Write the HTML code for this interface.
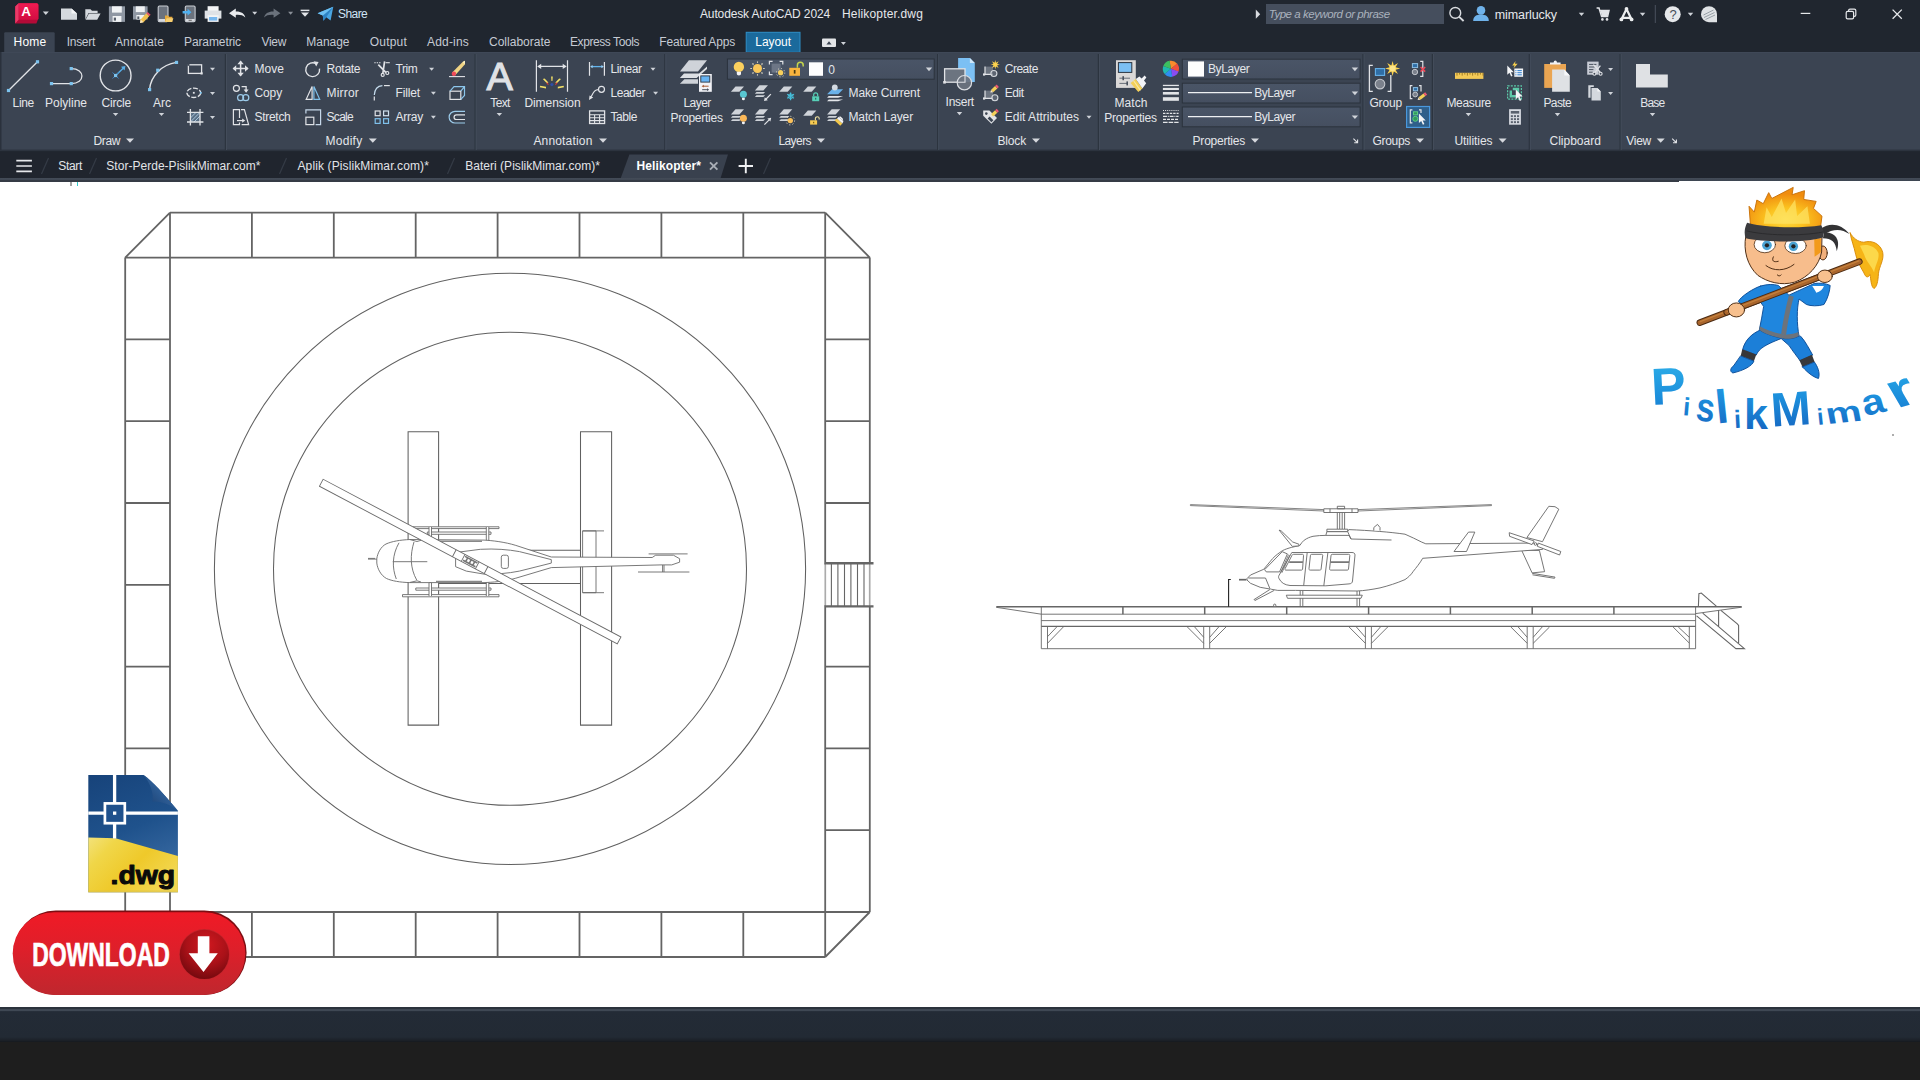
<!DOCTYPE html>
<html lang="en"><head><meta charset="utf-8"><title>Autodesk AutoCAD 2024 - Helikopter.dwg</title>
<style>
html,body{margin:0;padding:0;}
body{width:1920px;height:1080px;overflow:hidden;background:#fff;font-family:"Liberation Sans",sans-serif;position:relative;}
.t{position:absolute;white-space:pre;font-family:"Liberation Sans",sans-serif;}
.abs{position:absolute;}
#titlebar{left:0;top:0;width:1920px;height:52px;background:#20262f;}
#ribbon{left:0;top:52px;width:1920px;height:99px;background:#3b4452;}
#filetabs{left:0;top:151px;width:1920px;height:27px;background:#20252e;}
#tabline{left:0;top:177.7px;width:1920px;height:3px;background:linear-gradient(#444c58,#3c4450);}
#tabline2{left:0;top:180px;width:1678.8px;height:1.9px;background:#353b45;}
#bottom1{left:0;top:1007px;width:1920px;height:35px;background:linear-gradient(#2b333d 0,#2b333d 1.6px,#3f4854 2.2px,#3f4854 3.8px,#232b36 4.6px,#222a34 30px,#1b2027 33.5px,#15191e 35px);}
#bottom2{left:0;top:1042px;width:1920px;height:38px;background:#1e1e1e;}
svg{position:absolute;left:0;top:0;overflow:visible;}
</style></head><body>
<div class="abs" id="titlebar"></div>
<div class="abs" id="ribbon"></div>
<div class="abs" id="filetabs"></div>
<div class="abs" id="tabline"></div>
<div class="abs" id="tabline2"></div>
<div class="abs" id="bottom1"></div>
<div class="abs" id="bottom2"></div>
<svg width="1920" height="1080" viewBox="0 0 1920 1080" fill="none" stroke-linecap="butt" stroke-linejoin="miter">
<g stroke="#646464" stroke-width="1.8">
<path d="M170 212.6H825.2M125.2 257.6H869.8M125.2 912H869.8M170 957H825.2M125.2 257.6V912M170 212.6V957M825.2 212.6V957M869.8 257.6V912M125.2 257.6L170 212.6M825.2 212.6L869.8 257.6M869.8 912L825.2 957M125.2 912L170 957"/>
<path d="M251.9 212.6V257.6M251.9 912V957M125.2 339.4H170M825.2 339.4H869.8M333.8 212.6V257.6M333.8 912V957M125.2 421.2H170M825.2 421.2H869.8M415.7 212.6V257.6M415.7 912V957M125.2 503.0H170M825.2 503.0H869.8M497.6 212.6V257.6M497.6 912V957M125.2 584.8H170M579.5 212.6V257.6M579.5 912V957M125.2 666.6H170M825.2 666.6H869.8M661.4 212.6V257.6M661.4 912V957M125.2 748.4H170M825.2 748.4H869.8M743.3 212.6V257.6M743.3 912V957M125.2 830.2H170M825.2 830.2H869.8"/>
</g>
<g stroke="#666">
<path stroke-width="2.4" d="M825 563.2H873.5M825 606.4H873.5"/>
<path stroke-width="1.1" d="M831.4 563V606.5M837.9 563V606.5M844.5 563V606.5M850.9 563V606.5M857.5 563V606.5M864 563V606.5"/>
<path stroke="#fff" stroke-width="2.2" d="M825.2 564.6V605.2M869.8 564.6V605.2"/>
<path stroke-width="0.8" d="M825.2 563V606.5M869.8 563V606.5"/>
</g>
<g stroke="#606060" stroke-width="1.05">
<circle cx="510" cy="568.8" r="295.6"/><circle cx="510" cy="568.8" r="236.5"/>
<path d="M408.1 431.8H438.6V725.1H408.1ZM580.5 431.8H611.6V725.1H580.5ZM438.6 550.3H580.5M438.6 583.5H580.5"/>
</g>
<g stroke="#6a6a6a" stroke-width="0.9" fill="#fff">
<path d="M582.6 530.9H596V592.7H582.6Z"/><path d="M582.6 530.9H604M582.6 592.7H604"/>
<path d="M413 526.8H499V528.6H413ZM427.3 532H491V534.3H427.3ZM415.8 588H491V590.2H415.8ZM402.5 594.6H499V596.8H402.5Z"/>
<path d="M429 527V540.5H431.5V527M486.3 527V540.5H488.8V527M429 596V582.5H431.5V596M486.3 596V582.5H488.8V596"/>
<path d="M376.8 558.7C377.5 553 381 546.5 386 544C392 541.3 400 540 410 539.5L484 540.1C492 540.5 505 542 515.8 545.4L551.3 557L652.2 557.5L655.7 555.2H673.4L679.6 558.7V562.2L671.7 564.9H661L551.3 567.6L515.8 578.2C505 581.5 492 582.3 484 582.6H409.6C400 582.3 392 581 386.5 578.5C381 575.5 377.5 569 376.8 563.1Z"/>
<path d="M368 559.1H376.8M368 558.4H375"/>
<path d="M648.6 553.9H687.6M638 572H689.4M662.6 565V572M664 565V572"/>
<path d="M455.6 552.5L480.4 549.3C495 548.5 508 549.5 519.4 551.6L551.3 559.6V563.1L519.4 571.1C508 573.5 495 574.3 484 574.1L466.3 571.1L455.6 566.7Z"/>
<rect x="501.3" y="555.2" width="7.1" height="13.2" rx="2"/>
<path fill="none" d="M399 542.8C392 555 392 568 396.3 579M414 541.9C410 555 410 568 416.7 580M392.8 561.7H427.3"/>
<path fill="none" d="M410 539.6L417 541.5L421 540.3M409.6 582.5L417 580.8L421 582"/>
<path stroke-width="1.6" stroke="#888" fill="none" d="M436 541.3H482M436 581.6H482"/>
<g transform="translate(470.2 561.6) rotate(27.9)">
<rect x="-168.5" y="-3.95" width="337" height="7.9"/>
<path d="M-18 -3.95V3.95M18 -3.95V3.95M-8 -3.95V3.95M8 -3.95V3.95"/><path stroke-width="1.6" stroke="#777" d="M-7 -2.2H7M-7 2.2H7M-4 -3V3M0 -3V3M4 -3V3"/>
</g>
</g>
<g stroke="#666" stroke-width="0.9">
<path stroke-width="1.5" d="M996.3 606.8H1741.7"/>
<path d="M996.3 607.3L1041.3 614.2M1041.3 607V648.7M1041.3 614.2H1695.6M1041.3 620.6H1695.6M1695.6 607V648.7M1041.3 648.7H1695.6M1695.6 613.6L1741.7 607.2"/>
<path stroke-width="1.3" d="M1041.3 626.4H1695.6"/>
<path stroke-width="1.5" d="M1122.9 607V614.2M1204.7 607V614.2M1286.7 607V614.2M1368.6 607V614.2M1450.4 607V614.2M1532.2 607V614.2M1613.9 607V614.2"/>
<path d="M1047.5 626.4V648.7M1047.5 643.3L1063.3 627M1047.5 636.7L1056.7 627M1203.7 626.4V648.7M1209.7 626.4V648.7M1203.7 643.3L1187.4 627M1203.7 637.3L1194.7 627M1209.7 643.3L1226.0 627M1209.7 637.3L1218.7 627M1365.4 626.4V648.7M1371.4 626.4V648.7M1365.4 643.3L1349.1 627M1365.4 637.3L1356.4 627M1371.4 643.3L1387.7 627M1371.4 637.3L1380.4 627M1527.2 626.4V648.7M1533.2 626.4V648.7M1527.2 643.3L1510.9 627M1527.2 637.3L1518.2 627M1533.2 643.3L1549.5 627M1533.2 637.3L1542.2 627M1689.3 626.4V648.7M1689.3 643.1L1673.1 627M1689.3 637.3L1678.3 627"/>
<path stroke-width="1.1" d="M1698.4 606.1L1698.9 593.6L1701.3 593L1716.3 606.1M1702.7 613.2L1744.4 648.6H1735.9L1696.6 615.9M1718.6 610.3V626.7M1720.9 610.3L1737.3 623.9L1738.6 625.5V643.1"/>
<path stroke="#222" stroke-width="1.1" d="M1230.8 579.5H1228.6V606.7"/>
</g>
<g stroke="#666" stroke-width="0.9" fill="#fff">
<path d="M1190.4 504.6L1323.8 509.6V511L1190.4 505.6ZM1491.5 504.6L1358.1 509.6V511L1491.5 505.6Z" stroke-width="0.8"/>
<path d="M1323.8 508.8H1358V512.5H1323.8ZM1330 508.8V512.5M1352 508.8V512.5M1337.3 506.3H1344.6V508.8H1337.3ZM1337.3 512.5V529.2M1344.6 512.5V529.2M1339.7 512.5V529.2M1342.2 512.5V529.2"/>
<path d="M1326.9 529.2H1347.7V531.7H1326.9Z"/>
<path d="M1526.9 537.5L1548.8 506.3L1555 506.7L1558.8 509.2L1542.5 541.7Z"/>
<path d="M1521.7 550.4L1532.1 572.9L1544.6 571.7L1539.4 550.4Z"/>
<path d="M1532.1 573.3L1555 577.1L1554.5 578.3L1532.5 574.8"/>
<path d="M1247 578.6L1250.5 575L1263.7 569.3L1272.5 558.7C1276 555 1279 553 1282.2 550.8C1285 549.3 1288 548.3 1291.8 547.3L1299.8 545.5C1301 543.5 1302.5 541.6 1304.2 540.2C1307 538.2 1310 537 1313 536.3C1317 535.6 1322 535.4 1325.8 535.4L1326.9 531.7H1347.7L1348.8 529.6C1370 530.5 1390 532 1405 534.2C1411 536.5 1416 539.5 1421.7 542.1L1425.8 543.8L1534.2 543.1L1542.5 546.3V549.4L1422.7 558.3C1420 563 1416 568 1413.3 571.3C1411 575 1408 577.5 1405 579.6C1397 583 1388 586 1380 587.9C1372 589.5 1364 590.7 1357.1 591L1295.4 590.4H1277.8L1269.9 589L1260.2 587.3L1250.5 583.3L1247 580Z"/>
<path d="M1239 579.7H1246.5" stroke-width="1.7"/>
<path fill="none" d="M1248.3 578H1265.5L1269.9 588.6"/>
<path fill="none" d="M1264.6 569.7L1282.2 551.7L1287.4 553.9L1279.5 571.9H1266.3Z"/><path fill="none" d="M1288.6 554.6L1280.7 572.4M1289.8 555.2L1281.9 572.8" stroke-width="0.8"/>
<path fill="none" d="M1291.8 552.5H1352C1354 552.5 1355 553.5 1355 555L1352.5 581C1352.3 583 1351 583.8 1349 583.9L1325.8 585.8L1290 585.5C1284.5 585 1281 582.5 1279.2 578.8C1278.4 577.5 1278.4 576.8 1278.8 575.8Z"/>
<path fill="none" d="M1307.2 552.5L1303.7 585.5M1327.9 552.5L1323.8 585.8"/>
<path fill="none" d="M1293.6 554.3H1302.4C1303.3 554.3 1303.6 554.9 1303.5 555.7L1302.6 569C1302.5 569.9 1302 570.1 1301.2 570.1H1286C1285 570.1 1284.7 569.5 1285.1 568.6L1292 555.3C1292.4 554.6 1292.8 554.3 1293.6 554.3ZM1311.6 554.3H1321.5C1322.5 554.3 1322.8 554.9 1322.7 555.7L1321.1 569C1321 569.9 1320.6 570.1 1319.7 570.1H1310.2C1309.2 570.1 1308.9 569.5 1309 568.7L1310.4 555.7C1310.5 554.8 1310.8 554.3 1311.6 554.3ZM1332.2 554.3H1348.5C1349.6 554.3 1349.9 554.9 1349.8 555.7L1348.5 569C1348.4 569.9 1348 570.1 1347 570.1H1330.8C1329.8 570.1 1329.5 569.5 1329.6 568.7L1331 555.7C1331.1 554.8 1331.4 554.3 1332.2 554.3Z"/>
<path stroke-width="1.7" stroke="#777" d="M1289.2 562.2H1302.9M1330.4 562.2H1349"/>
<path fill="none" d="M1325.8 535.4H1349L1351 539L1391.5 540M1347.7 531.7L1351 539"/>
<path d="M1279.1 530.1L1281.3 531L1292.7 542L1298.9 544.2V545.9L1292.3 546.4Z"/>
<path d="M1373.8 530.6V527.5L1377.5 524.4L1380 527.5V530.6"/>
<path d="M1468.5 532.1H1474.8L1466.5 551.5H1454Z"/>
<path d="M1509.2 532.7L1534.2 541L1532 544.6L1509.6 536.3ZM1538.3 543.1L1560.8 551.5L1559.6 555L1537.3 546.3Z"/>
<circle cx="1535.5" cy="544" r="1.3"/>
<path d="M1300.2 590.6V606.7M1302.8 590.6V606.7M1357 591V606.7M1359.6 591V606.7"/>
<path d="M1286.3 595.2H1362.3L1361 598.3H1287.5Z"/>
<path d="M1269.9 589.5L1254 599.6L1254.9 600.5L1274.2 590.4"/>
<circle cx="1274.7" cy="605.3" r="1.2"/>
</g>
<path d="M71 182V186" stroke="#444" stroke-width="1"/><path d="M77.5 182V186" stroke="#3cc" stroke-width="1"/>
</svg>
<svg width="1920" height="182" viewBox="0 0 1920 182" fill="none">
<defs>
<linearGradient id="gA" x1="0" y1="0" x2="0" y2="1"><stop offset="0" stop-color="#f01b52"/><stop offset="1" stop-color="#d30d42"/></linearGradient>
<linearGradient id="gcombo" x1="0" y1="0" x2="0" y2="1"><stop offset="0" stop-color="#4a5567"/><stop offset="1" stop-color="#454f60"/></linearGradient>
</defs>
<path d="M4.2 52V33.5Q4.2 32.3 5.4 32.3H53.5Q54.7 32.3 54.7 33.5V52Z" fill="#3b4452"/>
<rect x="746.2" y="32.3" width="53.8" height="20" fill="#1b6a9c" stroke="#2f8fc8" stroke-width="1"/>
<rect x="0" y="52" width="1920" height="1" fill="#3f4857"/><rect x="0" y="149.6" width="1920" height="1.6" fill="#2c333e"/>
<rect x="0" y="52" width="1.5" height="98" fill="#2a313c"/>
<rect x="224.8" y="54" width="1.2" height="96" fill="#2c343f"/><rect x="226.0" y="54" width="1" height="96" fill="#434c5a"/>
<rect x="474.5" y="54" width="1.2" height="96" fill="#2c343f"/><rect x="475.7" y="54" width="1" height="96" fill="#434c5a"/>
<rect x="664.2" y="54" width="1.2" height="96" fill="#2c343f"/><rect x="665.4" y="54" width="1" height="96" fill="#434c5a"/>
<rect x="937.0" y="54" width="1.2" height="96" fill="#2c343f"/><rect x="938.2" y="54" width="1" height="96" fill="#434c5a"/>
<rect x="1097.8" y="54" width="1.2" height="96" fill="#2c343f"/><rect x="1099.0" y="54" width="1" height="96" fill="#434c5a"/>
<rect x="1362.4" y="54" width="1.2" height="96" fill="#2c343f"/><rect x="1363.6" y="54" width="1" height="96" fill="#434c5a"/>
<rect x="1431.8" y="54" width="1.2" height="96" fill="#2c343f"/><rect x="1433.0" y="54" width="1" height="96" fill="#434c5a"/>
<rect x="1528.7" y="54" width="1.2" height="96" fill="#2c343f"/><rect x="1529.9" y="54" width="1" height="96" fill="#434c5a"/>
<rect x="1619.5" y="54" width="1.2" height="96" fill="#2c343f"/><rect x="1620.7" y="54" width="1" height="96" fill="#434c5a"/>
<rect x="1266" y="4" width="178" height="20" fill="#454e5d"/>
<path d="M1255.8 9.6L1260.2 14.2L1255.8 18.8Z" fill="#d8dbe0"/>
<path d="M620.8 178L629.4 154.6H728L720.6 178Z" fill="#39414e"/>
<path d="M41.5 174L48.5 158" stroke="#343b46" stroke-width="1.2"/>
<path d="M89.5 174L96.5 158" stroke="#343b46" stroke-width="1.2"/>
<path d="M279.5 174L286.5 158" stroke="#343b46" stroke-width="1.2"/>
<path d="M447.5 174L454.5 158" stroke="#343b46" stroke-width="1.2"/>
<path d="M763.5 174L770.5 158" stroke="#343b46" stroke-width="1.2"/>
<path d="M16.3 160.6H31.9M16.3 166H31.9M16.3 171.4H31.9" stroke="#e6e8eb" stroke-width="1.6"/>
<path d="M710 162.3L717.4 169.7M717.4 162.3L710 169.7" stroke="#a9aeb6" stroke-width="1.9"/>
<path d="M738.6 166H753M745.8 158.8V173.2" stroke="#f0f1f3" stroke-width="1.9"/>
<path d="M15.2 6.5L18.6 3.2H36.6Q38.4 3.2 38.4 5V18.2L36.4 23.6H15.2Z" fill="#b30a37"/>
<path d="M18.6 3.2H36.6Q38.4 3.2 38.4 5V18.6Q38.4 19.8 37 19.8H18.6Z" fill="url(#gA)"/>
<path d="M15.2 6.5L18.6 3.2V19.8L15.2 23.6Z" fill="#ea3a68"/>
<path d="M42.8 11.5H48.8L45.8 14.9Z" fill="#cfd3d9"/>
<path d="M61 8.4H71.5L77 13.4V19.8H61Z" fill="#d5d9de"/><path d="M71.5 8.4V13.4H77Z" fill="#f4f5f7"/>
<path d="M85.3 19.6V9.2H90.5L92 10.8H97.6V13H88.6L85.3 19.6Z" fill="#d5d9de"/><path d="M88.9 13.6H100.6L97.2 19.8H85.6Z" fill="#d5d9de"/>
<path d="M108.9 6.3H125V21.9H108.9Z" fill="#8f97a3"/><rect x="112" y="6.3" width="9.8" height="6.3" fill="#f0f2f4"/><rect x="112.6" y="16" width="8.8" height="5.9" fill="#f0f2f4"/><rect x="113.8" y="17.6" width="2.2" height="3" fill="#555d69"/>
<path d="M133 6.3H147.6V19.5H133Z" fill="#8f97a3"/><rect x="135.8" y="6.3" width="9" height="5.8" fill="#f0f2f4"/><rect x="136.4" y="15" width="8" height="4.5" fill="#f0f2f4"/><rect x="137.3" y="16.4" width="2" height="2.6" fill="#555d69"/>
<path d="M140.6 19.4L146.4 13.2L149.4 16L143.5 22.2L140 22.9Z" fill="#f2c14e"/><path d="M146.4 13.2L147.6 12L150.6 14.8L149.4 16Z" fill="#e8506a"/><path d="M140.6 19.4L143.5 22.2L140 22.9Z" fill="#f7e6c4"/>
<rect x="158.2" y="6" width="9.8" height="15.8" rx="1.2" fill="#6b727d" stroke="#c9cdd3" stroke-width="1.1"/><rect x="158.8" y="19" width="8.8" height="2.6" fill="#d6d9de"/>
<path d="M165 22V15.6H168L169 16.8H172.4V22Z" fill="#e5a93c"/><path d="M166.6 18.3H173.4L172 22H165Z" fill="#f6cf72"/>
<rect x="185.3" y="6" width="9.8" height="15.8" rx="1.2" fill="#6b727d" stroke="#c9cdd3" stroke-width="1.1"/><rect x="185.9" y="19" width="8.8" height="2.6" fill="#d6d9de"/><rect x="188.6" y="19.8" width="3.2" height="0.9" fill="#555"/>
<path d="M182.6 11H187.6V8.8L191.4 12.2L187.6 15.6V13.4H182.6Z" fill="#4fb0f0"/>
<rect x="207.6" y="6.2" width="11" height="5" fill="#f3f4f6"/><path d="M204.7 10.6H221.4V18.6H204.7Z" fill="#dfe2e6"/><rect x="207.6" y="15.2" width="11" height="6.7" fill="#f3f4f6"/><rect x="209" y="17" width="8.2" height="3.6" fill="#79b8ee"/>
<path d="M229 13.2L235.8 8.6V11.4C241 11.2 244.6 13.4 245.3 17.6C243 15.2 240 14.6 235.8 14.9V17.8Z" fill="#e9ebee"/>
<path d="M252.2 11.7H257.2L254.7 14.7Z" fill="#cfd3d9"/>
<path d="M280.4 13.2L273.6 8.6V11.4C268.4 11.2 264.8 13.4 264.1 17.6C266.4 15.2 269.4 14.6 273.6 14.9V17.8Z" fill="#6b727c"/>
<path d="M288.1 11.7H293.1L290.6 14.7Z" fill="#8b9199"/>
<path d="M300.6 10.4H309.4" stroke="#e2e4e8" stroke-width="1.5"/>
<path d="M301.0 12.5H309.0L305.0 16.7Z" fill="#e2e4e8"/>
<path d="M317.6 13.2L333.3 6.8L330.6 20.6L326.2 17.2L323.4 20.8L322.8 15.6Z" fill="#4aa6e3"/><path d="M322.8 15.6L333.3 6.8L326.2 17.2L323.4 20.8Z" fill="#2d83c4"/><path d="M317.6 13.2L333.3 6.8L322.8 15.6Z" fill="#6cc0f2"/>
<circle cx="1455.3" cy="12.9" r="5.4" stroke="#d9dce0" stroke-width="1.4"/><path d="M1459.2 16.9L1463.6 21" stroke="#d9dce0" stroke-width="1.9"/>
<circle cx="1481" cy="10.4" r="4.3" fill="#6fb2ea"/><path d="M1473.2 21C1473.2 16.6 1476.4 14.6 1481 14.6C1485.6 14.6 1488.8 16.6 1488.8 21Z" fill="#6fb2ea"/>
<path d="M1578.8 12.8H1584.2L1581.5 16.0Z" fill="#cfd3d9"/>
<path d="M1596.6 8H1599L1601.6 16.6H1607.6L1609 10.6H1600" stroke="#e2e4e8" stroke-width="1.5" fill="none"/><path d="M1600.4 10.6H1609L1607.6 16H1601.8Z" fill="#e2e4e8"/><circle cx="1602.4" cy="19.4" r="1.3" fill="#e2e4e8"/><circle cx="1607" cy="19.4" r="1.3" fill="#e2e4e8"/>
<path d="M1626.5 9L1621.4 19.6M1626.5 9L1631.6 19.6M1623 17.8H1630" stroke="#eceef0" stroke-width="2.2"/><circle cx="1626.5" cy="9" r="1.9" fill="#eceef0"/><circle cx="1621.4" cy="19.4" r="1.9" fill="#eceef0"/><circle cx="1631.6" cy="19.4" r="1.9" fill="#eceef0"/>
<path d="M1639.8 12.8H1645.3L1642.6 16.0Z" fill="#cfd3d9"/>
<rect x="1654.8" y="5" width="1" height="18" fill="#4a525e"/>
<circle cx="1672.7" cy="14.2" r="8" fill="#e6e8eb"/>
<path d="M1687.8 12.8H1693.2L1690.5 16.0Z" fill="#cfd3d9"/>
<path d="M1709 6.2A8 8 0 1 0 1709 22.2H1717V14.2A8 8 0 0 0 1709 6.2Z" fill="#dfe2e5"/><path d="M1703.5 15L1713.5 10M1704 17.5L1714.5 12.5M1705.5 19.5L1715 15" stroke="#8f979f" stroke-width="0.9"/>
<path d="M1800.7 13.4H1810.3" stroke="#e6e8eb" stroke-width="1.2"/>
<rect x="1846.2" y="11.4" width="7.4" height="7.4" rx="1.4" stroke="#e6e8eb" stroke-width="1.2"/><path d="M1848.6 11.2V10.6Q1848.6 9.2 1850 9.2H1854.4Q1855.8 9.2 1855.8 10.6V15Q1855.8 16.4 1854.4 16.4H1853.8" stroke="#e6e8eb" stroke-width="1.2"/>
<path d="M1892.6 9.6L1901.8 18.8M1901.8 9.6L1892.6 18.8" stroke="#e6e8eb" stroke-width="1.3"/>
<rect x="822" y="38.6" width="14" height="8.4" rx="1" fill="#e3e5e8"/><path d="M826.4 44.4L829 41.2L831.6 44.4Z" fill="#3b4452"/>
<path d="M840.9 41.9H845.9L843.4 44.9Z" fill="#cfd3d9"/>
<path d="M8.5 90.5L37.5 61.8" stroke="#e1e3e7" stroke-width="1.3"/>
<rect x="6.90" y="88.90" width="3.2" height="3.2" fill="#7cc3ee"/>
<rect x="35.90" y="60.20" width="3.2" height="3.2" fill="#7cc3ee"/>
<path d="M51.5 83.6H71.25M71.25 83.6C85.5 83.6 85.5 68.6 71.25 68.6" stroke="#e1e3e7" stroke-width="1.3"/>
<rect x="49.90" y="82.00" width="3.2" height="3.2" fill="#7cc3ee"/>
<rect x="69.65" y="82.00" width="3.2" height="3.2" fill="#7cc3ee"/>
<rect x="69.65" y="67.00" width="3.2" height="3.2" fill="#7cc3ee"/>
<circle cx="115.6" cy="75.5" r="15.4" stroke="#e1e3e7" stroke-width="1.4"/>
<path d="M115.6 75.5L124 67.4" stroke="#58aee8" stroke-width="1.4"/><path d="M125.4 66L124.6 70.4L121 66.8Z" fill="#58aee8"/><path d="M112.6 72.5L118.6 78.5M118.6 72.5L112.6 78.5" stroke="#3b86c4" stroke-width="1"/>
<rect x="114.00" y="73.90" width="3.2" height="3.2" fill="#7cc3ee"/>
<path d="M149.6 89.6C150.5 76 162 64.5 176.5 62.4" stroke="#e1e3e7" stroke-width="1.4"/>
<rect x="148.00" y="88.00" width="3.2" height="3.2" fill="#7cc3ee"/>
<rect x="156.15" y="68.65" width="3.2" height="3.2" fill="#7cc3ee"/>
<rect x="174.90" y="60.80" width="3.2" height="3.2" fill="#7cc3ee"/>
<rect x="188.4" y="64.8" width="13.2" height="8.6" stroke="#e1e3e7" stroke-width="1.3"/>
<rect x="187.40" y="63.80" width="2" height="2" fill="#3b4452"/>
<rect x="200.50" y="72.30" width="2.2" height="2.2" fill="#e1e3e7"/>
<path d="M210.0 67.8H215.0L212.5 70.8Z" fill="#cfd3d9"/>
<ellipse cx="193.8" cy="92.8" rx="6.9" ry="4.7" stroke="#e1e3e7" stroke-width="1.3" stroke-dasharray="5 1.6"/>
<rect x="192.90" y="91.90" width="1.8" height="1.8" fill="#e1e3e7"/>
<rect x="199.90" y="91.90" width="1.8" height="1.8" fill="#7cc3ee"/>
<path d="M210.0 91.9H215.0L212.5 94.9Z" fill="#cfd3d9"/>
<rect x="190.4" y="112.4" width="9.6" height="9.6" fill="#5a7086"/><path d="M190.4 118L196 112.4M190.4 122L200 112.4M194 122L200 116" stroke="#a9c4dc" stroke-width="1"/>
<path d="M190.4 109V125.4M200 109V125.4M187 112.4H203.4M187 122H203.4" stroke="#e1e3e7" stroke-width="1.3"/>
<path d="M210.0 115.9H215.0L212.5 118.9Z" fill="#cfd3d9"/>
<path d="M112.8 112.9H118.3L115.6 116.1Z" fill="#cfd3d9"/>
<path d="M158.8 112.9H164.2L161.5 116.1Z" fill="#cfd3d9"/>
<path d="M126.0 138.4H134.0L130.0 142.8Z" fill="#d6d9de"/>
<path d="M233.4 68.5H247.8M240.6 61.4V75.6" stroke="#e1e3e7" stroke-width="1.5"/>
<path d="M232.6 68.5L236.2 65.3V71.7ZM248.6 68.5L245 65.3V71.7ZM240.6 60.6L237.4 64.2H243.8ZM240.6 76.4L237.4 72.8H243.8Z" fill="#e1e3e7"/>
<circle cx="236.4" cy="88.3" r="3" stroke="#e1e3e7" stroke-width="1.2"/><path d="M241.6 86.6H246.1V90.4" stroke="#e1e3e7" stroke-width="1.3"/><path d="M243.6 89.6H248.6L246.1 92.8Z" fill="#e1e3e7"/>
<circle cx="240.6" cy="97.7" r="3" stroke="#9ccbea" stroke-width="1.2"/><circle cx="245.8" cy="97.7" r="3" stroke="#9ccbea" stroke-width="1.2"/>
<path d="M239.5 118V109.6H233.4V124.6H239.5V122.6M241 109.6H244.4L248.6 124.6H241.6" stroke="#e1e3e7" stroke-width="1.2"/><path d="M237 120.6H243" stroke="#e1e3e7" stroke-width="1.2"/><path d="M245.2 120.6L242.2 118.4V122.8Z" fill="#e1e3e7"/>
<path d="M316.4 63.9A6.9 6.9 0 1 0 319.5 68.6" stroke="#e1e3e7" stroke-width="1.4"/><path d="M313.6 61.2L318.6 62L316.2 66.4Z" fill="#e1e3e7"/>
<path d="M312.1 86.4V99.3H306.2Z" stroke="#e1e3e7" stroke-width="1.2"/><path d="M313.9 86.4V99.3H319.7Z" stroke="#7fc0ea" stroke-width="1.2"/>
<rect x="305.9" y="117.2" width="7.9" height="7.4" stroke="#e1e3e7" stroke-width="1.2"/><path d="M305.9 113.4V109.8H320.6V124.6H315.6" stroke="#c6d8ea" stroke-width="1.2"/>
<path d="M374.3 62.7H381" stroke="#e1e3e7" stroke-width="1.1" stroke-dasharray="1.4 1"/><path d="M385.6 62.7H389.8" stroke="#e1e3e7" stroke-width="1.1"/>
<path d="M378.3 64.6L386 72.6M384.6 61.4L382.9 73" stroke="#e1e3e7" stroke-width="1.7"/><circle cx="382.7" cy="74.9" r="1.5" stroke="#e1e3e7" stroke-width="1.2"/><circle cx="387.3" cy="73" r="1.5" stroke="#e1e3e7" stroke-width="1.2"/>
<path d="M374.3 100.6V96.6" stroke="#e1e3e7" stroke-width="1.2"/><path d="M374.3 95C374.6 90 377.4 86 382.4 85.6" stroke="#c5dced" stroke-width="1.2"/><path d="M384 85.6H389.8" stroke="#e1e3e7" stroke-width="1.2"/>
<rect x="375.2" y="111" width="4.9" height="4.7" stroke="#e1e3e7" stroke-width="1.2"/>
<rect x="383.6" y="111" width="4.9" height="4.7" stroke="#cfe0ee" stroke-width="1.2"/>
<rect x="375.2" y="118.7" width="4.9" height="4.7" stroke="#7fc0ea" stroke-width="1.2"/>
<rect x="383.6" y="118.7" width="4.9" height="4.7" stroke="#7fc0ea" stroke-width="1.2"/>
<path d="M429.1 67.8H434.1L431.6 70.8Z" fill="#cfd3d9"/>
<path d="M430.9 91.8H435.9L433.4 94.8Z" fill="#cfd3d9"/>
<path d="M430.9 115.7H435.9L433.4 118.7Z" fill="#cfd3d9"/>
<path d="M452.2 72.4L462.6 62L465 60.8L464.8 64.4L455.2 75.2Z" fill="#f0d484"/><path d="M464.8 64.4L465 60.8L462.6 62Z" fill="#fff3c4"/><circle cx="453.9" cy="73.7" r="2.2" fill="#f04a5a"/>
<path d="M449 76.6H465" stroke="#e1e3e7" stroke-width="1.1"/>
<rect x="450" y="91.2" width="10.8" height="8.2" stroke="#e1e3e7" stroke-width="1.2"/><path d="M450 91.2L454 86.7H464.5V95.4L460.8 99.4M460.8 91.2L464.5 86.7" stroke="#8cc6ec" stroke-width="1.2"/>
<path d="M465 111.3H455A5.85 5.85 0 0 0 455 123H465" stroke="#9ccbea" stroke-width="1.2"/><path d="M465 114.8H456.4A2.35 2.35 0 0 0 456.4 119.5H465" stroke="#e1e3e7" stroke-width="1.2"/>
<path d="M368.8 138.4H376.8L372.8 142.8Z" fill="#d6d9de"/>
<path d="M496.6 112.9H502.1L499.4 116.1Z" fill="#cfd3d9"/>
<path d="M536.4 60.2V91.8M567.5 60.2V91.8M538.6 66.4H565.4" stroke="#e1e3e7" stroke-width="1.2"/><path d="M537.2 66.4L541.2 63.8V69ZM566.7 66.4L562.7 63.8V69Z" fill="#e1e3e7"/>
<path d="M551.1 76.6H552.8L552.4 81H551.5ZM542.8 79L544.6 78.4L548.4 82.4L547.2 83.6ZM561 79L559.2 78.4L555.4 82.4L556.6 83.6ZM539.8 87.2L540.2 85.8L546 86.8V88.4ZM564 87.2L563.6 85.8L557.8 86.8V88.4Z" fill="#f2e066"/>
<path d="M546.6 82.6L548.4 84.6M557.2 82.6L555.4 84.6" stroke="#d03a3a" stroke-width="1.2"/><circle cx="551.9" cy="84.6" r="1.6" fill="#2f4fa8"/>
<path d="M589.5 61.9V75.8M604.4 61.9V75.8" stroke="#e1e3e7" stroke-width="1.2"/><path d="M591 66.6H603" stroke="#62b4ee" stroke-width="1.3"/><path d="M590.2 66.6L592.6 65V68.2ZM603.8 66.6L601.4 65V68.2Z" fill="#9fd0f2"/>
<circle cx="601.5" cy="89.3" r="3" stroke="#e1e3e7" stroke-width="1.2"/><path d="M598.5 89.6C594.5 89.6 593.5 92.5 590.6 97.6" stroke="#e1e3e7" stroke-width="1.2"/><path d="M589 100L589.6 95.6L593.2 97.6Z" fill="#e1e3e7"/>
<rect x="589.6" y="110.9" width="15" height="12.6" stroke="#e1e3e7" stroke-width="1.3"/><path d="M589.6 114.7H604.6M589.6 117.7H604.6M589.6 120.6H604.6M594.6 114.7V123.5M599.6 114.7V123.5" stroke="#e1e3e7" stroke-width="1.1"/>
<path d="M650.5 67.8H655.5L653.0 70.8Z" fill="#cfd3d9"/>
<path d="M653.1 91.8H658.1L655.6 94.8Z" fill="#cfd3d9"/>
<path d="M599.0 138.4H607.0L603.0 142.8Z" fill="#d6d9de"/>
<path d="M679.9 83.8L684.4 79.3H698V83.8Z" fill="#cfd3d9"/><path d="M679.9 77.9L684 73.4H699L707 66.6V69L696.6 77.9Z" fill="#dde0e4"/><path d="M679.9 71.6L688.9 60.2H707L698 71.6Z" fill="#cfd3d9"/>
<rect x="699" y="74" width="12.8" height="17.8" fill="#f1f2f6"/><rect x="700.8" y="75.9" width="9" height="6.2" fill="#66b4f4" stroke="#2b3440" stroke-width="0.9"/>
<path d="M703 86.2H708.6" stroke="#a65a32" stroke-width="1"/><path d="M701.6 86.2L703.8 84.8V87.6Z" fill="#a65a32"/><path d="M702.2 89.7H707.6" stroke="#48505c" stroke-width="1"/><path d="M709.2 89.7L707 88.3V91.1Z" fill="#48505c"/>
<rect x="727.4" y="59" width="206.8" height="20.2" fill="url(#gcombo)" stroke="#2b323d" stroke-width="1"/>
<circle cx="738.9" cy="66.9" r="5.2" fill="#fbd05e"/><path d="M736.8 71.8H741V74Q741 75.4 738.9 75.4Q736.8 75.4 736.8 74Z" fill="#f1f2f5"/>
<circle cx="757.5" cy="68.5" r="4.5" fill="#fbc85a"/><path d="M757.5 61.4V62.8M757.5 74.2V75.6M750.4 68.5H751.8M763.2 68.5H764.6M752.5 63.5L753.5 64.5M761.5 72.5L762.5 73.5M752.5 73.5L753.5 72.5M761.5 64.5L762.5 63.5" stroke="#f3ead0" stroke-width="1.1"/>
<rect x="771.6" y="63.6" width="9" height="9" fill="#6d7686"/><path d="M769.4 64.6V61.4H772.6M779.6 61.4H782.8V64.6M769.4 71.4V74.6H772.6" stroke="#e1e3e7" stroke-width="1.2"/><circle cx="780.6" cy="72.7" r="2.6" fill="#f7cf5c"/><circle cx="780.6" cy="72.7" r="4.2" stroke="#e8e2c8" stroke-width="1" stroke-dasharray="1 2.3"/>
<rect x="789.3" y="67.8" width="10.7" height="8" fill="#f9b43e"/><path d="M797.4 67.8V65.2A2.9 2.9 0 0 1 803.2 65.2V66.4" stroke="#c4d44c" stroke-width="1.5"/><rect x="793.8" y="70" width="1.7" height="3.6" fill="#4a3a10"/>
<rect x="809" y="62.3" width="14" height="13.5" fill="#fdfdfd"/>
<path d="M925.8 67.6H932.2L929.0 71.2Z" fill="#cfd3d9"/>
<path d="M730.9 91.8L735.5 86.4H744.0L739.4 91.8Z" fill="#cfd3d9"/>
<circle cx="743.4" cy="94.3" r="3.5" fill="#58c6d2"/><path d="M742 97.8H744.8V99.2Q744.8 100.2 743.4 100.2Q742 100.2 742 99.2Z" fill="#f1f2f5"/>
<path d="M754.9 97.0L756.5 95.2H765.1L763.4 97.0Z" fill="#cfd3d9"/>
<path d="M754.9 93.7L756.5 91.9H765.1L763.4 93.7Z" fill="#cfd3d9"/>
<path d="M754.9 90.4L759.5 85.2H768.0L763.4 90.4Z" fill="#cfd3d9"/>
<path d="M770.9 94.2L765.6 99.5" stroke="#e1e3e7" stroke-width="1.2"/><path d="M764 101L764.8 97.2L767.8 100.2Z" fill="#e1e3e7"/>
<path d="M779.2 91.8L783.8 86.4H792.3L787.7 91.8Z" fill="#cfd3d9"/>
<path d="M790.6 92.4V100.2M787.2 94.3L794 98.3M794 94.3L787.2 98.3" stroke="#46bcd8" stroke-width="1.2"/><circle cx="790.6" cy="96.3" r="2.4" stroke="#46bcd8" stroke-width="0.9"/>
<path d="M803.2 91.8L807.8 86.4H816.3L811.7 91.8Z" fill="#cfd3d9"/>
<rect x="812.2" y="96.3" width="7" height="4.9" fill="#58d0b8"/><path d="M813.7 96.3V94.8A2 2 0 0 1 817.7 94.8V96.3" stroke="#58d0b8" stroke-width="1.2"/><rect x="815.2" y="97.8" width="1" height="1.8" fill="#1d5a4c"/>
<path d="M827.1 101.2L828.7 99.4H843.1L838.2 101.2Z" fill="#e4e6ea"/><path d="M827.1 97.7L828.7 95.9H843.1L838.2 97.7Z" fill="#e4e6ea"/>
<path d="M827.1 94.2L832 89.3H843.1L838.2 94.2Z" fill="#6ab2ea"/><circle cx="834.8" cy="87.5" r="2.9" fill="#d3dae2"/>
<path d="M730.9 121.0L732.5 119.2H741.1L739.4 121.0Z" fill="#cfd3d9"/>
<path d="M730.9 117.7L732.5 115.9H741.1L739.4 117.7Z" fill="#cfd3d9"/>
<path d="M730.9 114.4L735.5 109.2H744.0L739.4 114.4Z" fill="#cfd3d9"/>
<circle cx="743.4" cy="118.3" r="3.5" fill="#fbb858"/><path d="M742 121.8H744.8V123.2Q744.8 124.2 743.4 124.2Q742 124.2 742 123.2Z" fill="#f1f2f5"/>
<path d="M754.9 121.0L756.5 119.2H765.1L763.4 121.0Z" fill="#cfd3d9"/>
<path d="M754.9 117.7L756.5 115.9H765.1L763.4 117.7Z" fill="#cfd3d9"/>
<path d="M754.9 114.4L759.5 109.2H768.0L763.4 114.4Z" fill="#cfd3d9"/>
<path d="M764.4 124.6L769.6 119.4" stroke="#e1e3e7" stroke-width="1.2"/><path d="M771.2 117.8L770.4 121.6L767.4 118.6Z" fill="#e1e3e7"/>
<path d="M779.2 121.0L780.8 119.2H789.4L787.7 121.0Z" fill="#cfd3d9"/>
<path d="M779.2 117.7L780.8 115.9H789.4L787.7 117.7Z" fill="#cfd3d9"/>
<path d="M779.2 114.4L783.8 109.2H792.3L787.7 114.4Z" fill="#cfd3d9"/>
<circle cx="790.3" cy="120.6" r="2.7" fill="#f9c05a"/><circle cx="790.3" cy="120.6" r="4.3" stroke="#efe6c8" stroke-width="1" stroke-dasharray="1 2.3"/>
<path d="M803.2 115.8L807.8 110.4H816.3L811.7 115.8Z" fill="#cfd3d9"/>
<rect x="810.1" y="120.3" width="7" height="4.3" fill="#f6ca52"/><path d="M815.4 120.3V118.6A1.9 1.9 0 0 1 819.2 118.6V119.4" stroke="#f1e3a0" stroke-width="1.1"/><rect x="813.2" y="121.8" width="1" height="1.5" fill="#5a4a10"/>
<path d="M827.1 121.0L828.7 119.2H837.3L835.6 121.0Z" fill="#cfd3d9"/>
<path d="M827.1 117.7L828.7 115.9H837.3L835.6 117.7Z" fill="#cfd3d9"/>
<path d="M827.1 114.4L831.7 109.2H840.2L835.6 114.4Z" fill="#cfd3d9"/>
<path d="M834.6 120.6L837 118.4L842.4 123.6L840.2 125.8Z" fill="#f2c84c"/><path d="M837 118.4L838.8 116.8L843.4 121.4L842.4 123.6Z" fill="#f4f4f6"/><path d="M838.8 116.8L840.6 116.4L842.6 118.4L843.4 121.4Z" fill="#f4f4f6"/>
<path d="M817.0 138.4H825.0L821.0 142.8Z" fill="#d6d9de"/>
<path d="M958.1 58.1H969.9L974.8 62.9V82H958.1Z" fill="#7cc0f4"/><path d="M969.9 58.1V62.9H974.8Z" fill="#cfe7f9"/>
<rect x="944.6" y="68.8" width="20.4" height="13.4" fill="#6c7480" stroke="#e1e3e7" stroke-width="1.3"/><rect x="943.2" y="81" width="2.6" height="2.6" fill="#e1e3e7"/>
<circle cx="964.4" cy="82.7" r="7.2" fill="#6c7480" fill-opacity="0.92" stroke="#dadde2" stroke-width="1.2"/><path d="M957.2 82.2H965V75.6" stroke="#dadde2" stroke-width="1.1"/>
<path d="M956.8 112.1H962.2L959.5 115.3Z" fill="#cfd3d9"/>
<rect x="985" y="66.6" width="8" height="7.6" fill="#6c7480"/><path d="M985 66.6V74.39999999999999H993" stroke="#e1e3e7" stroke-width="1.2"/><rect x="983" y="73.39999999999999" width="2.2" height="2.2" fill="#e1e3e7"/>
<circle cx="993.9" cy="73.5" r="3" fill="#6c7480" fill-opacity="0.7" stroke="#d4d8dd" stroke-width="1.1"/>
<path d="M995.3 60.0L996.0 62.8L998.6 61.3L997.1 63.9L999.9 64.6L997.1 65.3L998.6 67.9L996.0 66.4L995.3 69.2L994.6 66.4L992.0 67.9L993.5 65.3L990.7 64.6L993.5 63.9L992.0 61.3L994.6 62.8Z" fill="#fbd24e"/>
<rect x="985" y="90.6" width="8" height="7.6" fill="#6c7480"/><path d="M985 90.6V98.39999999999999H993" stroke="#e1e3e7" stroke-width="1.2"/><rect x="983" y="97.39999999999999" width="2.2" height="2.2" fill="#e1e3e7"/>
<circle cx="994.9" cy="97.7" r="3" fill="#6c7480" fill-opacity="0.7" stroke="#d4d8dd" stroke-width="1.1"/>
<path d="M990.4 92.6L993.2 92.2L991.1 89.8Z" fill="#f4e6cc"/><path d="M993.2 92.2L997.3 88.5L995.1 86.1L991.1 89.8Z" fill="#f3cf58"/><path d="M997.3 88.5L998.9 87.0L996.7 84.6L995.1 86.1Z" fill="#ee5a72"/>
<path d="M983.2 110.6H989.4L997 117.9L991.4 123.8L983.2 115.8Z" fill="#e1e3e7"/><circle cx="986.3" cy="113.6" r="1.3" fill="#3b4452"/><path d="M989.6 116.4L993.4 120.2L991.4 122.2L987.6 118.4Z" fill="#3b4452"/>
<path d="M990.4 116.8L993.2 116.4L991.1 114.0Z" fill="#f4e6cc"/><path d="M993.2 116.4L997.3 112.7L995.1 110.3L991.1 114.0Z" fill="#f3cf58"/><path d="M997.3 112.7L998.9 111.2L996.7 108.8L995.1 110.3Z" fill="#ee5a72"/>
<path d="M1086.5 115.8H1091.5L1089.0 118.8Z" fill="#cfd3d9"/>
<path d="M1032.0 138.4H1040.0L1036.0 142.8Z" fill="#d6d9de"/>
<rect x="1116" y="60.2" width="19.8" height="27.7" fill="#dbd9d8"/><rect x="1118.4" y="62.6" width="13.4" height="9.8" fill="#7cc0f4" stroke="#2b3440" stroke-width="1"/>
<path d="M1119.4 78.2H1130M1119.4 83.4H1128" stroke="#5a626e" stroke-width="0.9"/><rect x="1122.4" y="76.2" width="1.6" height="4" fill="#4a525e"/><rect x="1126.4" y="81.4" width="1.6" height="4" fill="#4a525e"/>
<path d="M1130.6 83.1L1135.8 78.9L1142.4 88.6L1138.3 92.1Z" fill="#f3cf58"/><path d="M1133.6 80.8L1140.4 90.4" stroke="#f9eaa8" stroke-width="1.1"/><path d="M1135.8 78.9L1139.4 76.4L1141.6 78.6L1144.6 75.6L1146.4 77.4L1144 80.4L1146.2 83.2L1142.4 88.6Z" fill="#f2f3f6"/>
<path d="M1170.9 68.8L1169.49 60.82A8.1 8.1 0 0 1 1177.19 63.70Z" fill="#f98c2c"/>
<path d="M1170.9 68.8L1177.10 63.59A8.1 8.1 0 0 1 1178.46 71.70Z" fill="#f0503c"/>
<path d="M1170.9 68.8L1178.51 71.57A8.1 8.1 0 0 1 1172.17 76.80Z" fill="#8a4cf0"/>
<path d="M1170.9 68.8L1172.31 76.78A8.1 8.1 0 0 1 1164.61 73.90Z" fill="#2f8cf0"/>
<path d="M1170.9 68.8L1164.70 74.01A8.1 8.1 0 0 1 1163.34 65.90Z" fill="#20b8b0"/>
<path d="M1170.9 68.8L1163.29 66.03A8.1 8.1 0 0 1 1169.63 60.80Z" fill="#3cc060"/>
<rect x="1162.9" y="84.8" width="16" height="1.3" fill="#e3e5e8"/>
<rect x="1162.9" y="87.9" width="16" height="2.1" fill="#e3e5e8"/>
<rect x="1162.9" y="92" width="16" height="2.6" fill="#e3e5e8"/>
<rect x="1162.9" y="97.2" width="16" height="3.6" fill="#e3e5e8"/>
<path d="M1163 110.5H1178.6" stroke="#e3e5e8" stroke-width="1.1" stroke-dasharray="1 1.1"/><path d="M1163 113.4H1178.6" stroke="#e3e5e8" stroke-width="1.2" stroke-dasharray="2.4 1"/><path d="M1163 116.4H1178.6" stroke="#e3e5e8" stroke-width="1.1" stroke-dasharray="4 0.8 1 0.8"/><path d="M1163 119.4H1178.6" stroke="#e3e5e8" stroke-width="1.2" stroke-dasharray="3 1"/><path d="M1163 122.4H1178.6" stroke="#e3e5e8" stroke-width="1.3" stroke-dasharray="4.6 1"/>
<rect x="1182.3" y="59.2" width="177.8" height="19.8" fill="url(#gcombo)" stroke="#2b323d" stroke-width="1"/>
<path d="M1351.7 67.6H1358.1L1354.9 71.2Z" fill="#cfd3d9"/>
<rect x="1182.3" y="83.2" width="177.8" height="19.8" fill="url(#gcombo)" stroke="#2b323d" stroke-width="1"/>
<path d="M1351.7 91.6H1358.1L1354.9 95.2Z" fill="#cfd3d9"/>
<rect x="1182.3" y="107" width="177.8" height="19.8" fill="url(#gcombo)" stroke="#2b323d" stroke-width="1"/>
<path d="M1351.7 115.4H1358.1L1354.9 119.0Z" fill="#cfd3d9"/>
<rect x="1188" y="61.4" width="16" height="15.2" fill="#fdfdfd"/>
<path d="M1188 92.6H1252M1188 116.6H1252" stroke="#eef0f2" stroke-width="1.1"/>
<path d="M1251.0 138.4H1259.0L1255.0 142.8Z" fill="#d6d9de"/>
<path d="M1353.4 138.6L1357.4 142.6M1357.6 139.4V142.8H1354.2" stroke="#e1e3e7" stroke-width="1.1"/>
<path d="M1372.8 65.4H1369.4V91.4H1372.8M1387.6 91.4H1390.8V75" stroke="#e1e3e7" stroke-width="1.3"/>
<rect x="1375.4" y="68.6" width="9.2" height="6.8" fill="#2f6ea6" stroke="#66b2ea" stroke-width="1.1"/><circle cx="1380" cy="84.1" r="4.8" fill="#7b818c" stroke="#c2c6cc" stroke-width="1.1"/>
<path d="M1392.6 60.9L1393.8 65.5L1398.0 63.1L1395.6 67.3L1400.2 68.5L1395.6 69.7L1398.0 73.9L1393.8 71.5L1392.6 76.1L1391.4 71.5L1387.2 73.9L1389.6 69.7L1385.0 68.5L1389.6 67.3L1387.2 63.1L1391.4 65.5Z" fill="#fbd24e"/>
<circle cx="1392.6" cy="68.5" r="3" fill="#fde58a"/>
<rect x="1412.4" y="63.6" width="5.2" height="4" fill="#2f6ea6" stroke="#8cbfe4" stroke-width="1"/><circle cx="1414.9" cy="72" r="2.7" fill="#7b818c" stroke="#c2c6cc" stroke-width="1"/>
<path d="M1420.2 61.3H1422.8V76.4H1420.2" stroke="#e1e3e7" stroke-width="1.2"/><path d="M1420.6 67L1425.2 71.6M1425.2 67L1420.6 71.6" stroke="#f04a5a" stroke-width="1.5"/>
<path d="M1412.4 85.6H1410.3V98.6H1412.4M1419 85.6H1421V91.6" stroke="#e1e3e7" stroke-width="1.2"/><rect x="1413.4" y="87.6" width="4.2" height="3.2" fill="#2f6ea6" stroke="#8cbfe4" stroke-width="1"/><circle cx="1415.2" cy="94.5" r="2.4" fill="#7b818c" stroke="#c2c6cc" stroke-width="1"/>
<path d="M1417.6 99.9L1420.5 99.8L1418.6 97.2Z" fill="#f4e6cc"/><path d="M1420.5 99.8L1425.4 96.1L1423.5 93.5L1418.6 97.2Z" fill="#f3cf58"/><path d="M1425.4 96.1L1427.2 94.8L1425.2 92.2L1423.5 93.5Z" fill="#ee5a72"/>
<rect x="1406.6" y="106.5" width="23" height="20.9" fill="#2f5f8a" stroke="#4a98dc" stroke-width="1.2"/>
<path d="M1412.4 109.9H1410.3V122.9H1412.4M1419 109.9H1421V113" stroke="#e1e3e7" stroke-width="1.2"/><rect x="1413.5" y="111.8" width="4" height="3" fill="#2f9a5c" stroke="#5cc884" stroke-width="1"/><circle cx="1415.3" cy="118.8" r="2.5" fill="#2f9a5c" stroke="#5cc884" stroke-width="1"/>
<path d="M1418.9 113.4L1418.9 123.1L1421.2 121.0L1422.9 124.8L1424.4 124.1L1422.7 120.4L1425.7 120.4Z" fill="#f4f5f7"/>
<path d="M1416.0 138.4H1424.0L1420.0 142.8Z" fill="#d6d9de"/>
<rect x="1455" y="72.8" width="28.4" height="6.1" fill="#f3c956"/>
<path d="M1457.0 72.8V75.6M1459.6 72.8V74.6M1462.2 72.8V75.6M1464.8 72.8V74.6M1467.4 72.8V75.6M1470.0 72.8V74.6M1472.6 72.8V75.6M1475.2 72.8V74.6M1477.8 72.8V75.6M1480.4 72.8V74.6M1483.0 72.8V75.6" stroke="#8a6a1c" stroke-width="0.8"/>
<path d="M1465.7 113.0H1471.2L1468.4 116.2Z" fill="#cfd3d9"/>
<path d="M1507.3 65.6L1507.3 74.8L1509.5 72.8L1511.1 76.4L1512.5 75.8L1510.9 72.3L1513.8 72.3Z" fill="#f4f5f7"/>
<path d="M1515.6 61L1512.2 65.4H1514.6L1513.4 68.6L1517.6 63.8H1515Z" fill="#f6cf4e"/>
<rect x="1514.3" y="68.5" width="8.8" height="8.3" fill="#f1f3f6"/><path d="M1517.4 70.6H1521.8M1517.4 72.7H1521.8M1517.4 74.8H1521.8" stroke="#2f7fd0" stroke-width="1"/><path d="M1515.4 70.6H1516.4M1515.4 72.7H1516.4M1515.4 74.8H1516.4" stroke="#2f7fd0" stroke-width="1"/>
<rect x="1507.6" y="85.8" width="13.8" height="13.4" stroke="#5cc8a8" stroke-width="1.2" stroke-dasharray="2 1.2"/><path d="M1509.6 90.4H1512V95H1516.6V97.4H1509.6ZM1512.8 87.8H1519.2V95H1516.8V90.2H1512.8Z" fill="#5cc8a8"/>
<path d="M1515.8 89.6L1515.8 99.3L1518.1 97.2L1519.8 101.0L1521.3 100.3L1519.6 96.6L1522.6 96.6Z" fill="#f4f5f7"/>
<rect x="1509.1" y="109.2" width="11.8" height="15.5" fill="#d7dbe1"/><rect x="1510.8" y="111" width="8.4" height="2.6" fill="#5a626e"/>
<rect x="1510.8" y="115.2" width="2.1" height="1.9" fill="#5a626e"/>
<rect x="1513.9" y="115.2" width="2.1" height="1.9" fill="#5a626e"/>
<rect x="1517.0" y="115.2" width="2.1" height="1.9" fill="#5a626e"/>
<rect x="1510.8" y="118.2" width="2.1" height="1.9" fill="#5a626e"/>
<rect x="1513.9" y="118.2" width="2.1" height="1.9" fill="#5a626e"/>
<rect x="1517.0" y="118.2" width="2.1" height="1.9" fill="#5a626e"/>
<rect x="1510.8" y="121.2" width="2.1" height="1.9" fill="#5a626e"/>
<rect x="1513.9" y="121.2" width="2.1" height="1.9" fill="#5a626e"/>
<rect x="1517.0" y="121.2" width="2.1" height="1.9" fill="#5a626e"/>
<path d="M1498.6 138.4H1506.6L1502.6 142.8Z" fill="#d6d9de"/>
<rect x="1544.2" y="64" width="21.8" height="23.9" fill="#eaa552"/><path d="M1550 64.4V62.4H1553.6Q1553.8 60.4 1555.3 60.4Q1556.8 60.4 1557 62.4H1560.6V64.4Z" fill="#f1f2f5"/>
<path d="M1552.1 69.5H1564.3L1569.8 75.4V91.8H1552.1Z" fill="#dfe1e4"/><path d="M1564.3 69.5V75.4H1569.8Z" fill="#f7f8fa"/>
<path d="M1554.8 113.0H1560.2L1557.5 116.2Z" fill="#cfd3d9"/>
<rect x="1587.2" y="61.6" width="11.4" height="13.1" fill="#c9cdd6"/><path d="M1589 64.4H1596.4M1589 67H1594.6M1589 69.6H1593.4M1589 72.2H1592.8" stroke="#4a525e" stroke-width="1"/>
<path d="M1593.4 64.6L1600.2 72.2M1600.4 65.6L1595 72.4" stroke="#e1e3e7" stroke-width="1.3"/><circle cx="1594.4" cy="73.8" r="1.5" stroke="#e1e3e7" stroke-width="1.1" fill="#3b4452"/><circle cx="1600.6" cy="73.8" r="1.5" stroke="#e1e3e7" stroke-width="1.1" fill="#3b4452"/>
<path d="M1588.3 85.2H1593.8V87H1590.6V97.7H1588.3Z" fill="#d4d8de"/><path d="M1591.5 87.9H1597.4L1600.8 91.4V100.4H1591.5Z" fill="#d4d8de"/><path d="M1597.4 87.9V91.4H1600.8Z" fill="#f2f3f6"/>
<path d="M1608.1 68.1H1613.1L1610.6 71.1Z" fill="#cfd3d9"/>
<path d="M1608.1 91.9H1613.1L1610.6 94.9Z" fill="#cfd3d9"/>
<path d="M1636 64H1650V74.4H1667.8V87.6H1636Z" fill="#dfe1e4"/>
<path d="M1649.8 113.0H1655.2L1652.5 116.2Z" fill="#cfd3d9"/>
<path d="M1656.7 138.4H1664.7L1660.7 142.8Z" fill="#d6d9de"/>
<path d="M1672.2 138.6L1676.2 142.6M1676.4 139.4V142.8H1673" stroke="#e1e3e7" stroke-width="1.1"/>
</svg>
<span class="t" style="left:338.0px;top:5.86px;font-size:12px;line-height:16px;color:#cfe3f5;letter-spacing:-0.565px;">Share</span>
<span class="t" style="left:700.0px;top:5.86px;font-size:12px;line-height:16px;color:#e6e8ec;letter-spacing:-0.131px;">Autodesk AutoCAD 2024</span>
<span class="t" style="left:842.0px;top:5.86px;font-size:12px;line-height:16px;color:#e6e8ec;letter-spacing:0.163px;">Helikopter.dwg</span>
<span class="t" style="left:1268.7px;top:6.54px;font-size:11.5px;line-height:15px;color:#aab2be;letter-spacing:-0.467px;font-style:italic;">Type a keyword or phrase</span>
<span class="t" style="left:1494.7px;top:6.69px;font-size:12.5px;line-height:16px;color:#e6e8ec;letter-spacing:-0.090px;">mimarlucky</span>
<span class="t" style="left:21.3px;top:3.34px;font-size:13.5px;line-height:18px;color:#ffffff;letter-spacing:0.450px;font-weight:bold;">A</span>
<span class="t" style="left:13.5px;top:33.86px;font-size:12px;line-height:16px;color:#ffffff;letter-spacing:0.222px;">Home</span>
<span class="t" style="left:66.7px;top:33.86px;font-size:12px;line-height:16px;color:#c5cad3;letter-spacing:-0.285px;">Insert</span>
<span class="t" style="left:115.0px;top:33.86px;font-size:12px;line-height:16px;color:#c5cad3;letter-spacing:0.120px;">Annotate</span>
<span class="t" style="left:184.0px;top:33.86px;font-size:12px;line-height:16px;color:#c5cad3;letter-spacing:-0.102px;">Parametric</span>
<span class="t" style="left:261.5px;top:33.86px;font-size:12px;line-height:16px;color:#c5cad3;letter-spacing:-0.324px;">View</span>
<span class="t" style="left:306.3px;top:33.86px;font-size:12px;line-height:16px;color:#c5cad3;letter-spacing:-0.028px;">Manage</span>
<span class="t" style="left:369.8px;top:33.86px;font-size:12px;line-height:16px;color:#c5cad3;letter-spacing:0.196px;">Output</span>
<span class="t" style="left:427.0px;top:33.86px;font-size:12px;line-height:16px;color:#c5cad3;letter-spacing:0.187px;">Add-ins</span>
<span class="t" style="left:489.0px;top:33.86px;font-size:12px;line-height:16px;color:#c5cad3;letter-spacing:0.012px;">Collaborate</span>
<span class="t" style="left:570.0px;top:33.86px;font-size:12px;line-height:16px;color:#c5cad3;letter-spacing:-0.422px;">Express Tools</span>
<span class="t" style="left:659.3px;top:33.86px;font-size:12px;line-height:16px;color:#c5cad3;letter-spacing:-0.181px;">Featured Apps</span>
<span class="t" style="left:755.3px;top:33.86px;font-size:12px;line-height:16px;color:#ffffff;letter-spacing:-0.055px;">Layout</span>
<span class="t" style="left:12.5px;top:94.86px;font-size:12px;line-height:16px;color:#e4e6ea;letter-spacing:-0.297px;">Line</span>
<span class="t" style="left:45.0px;top:94.86px;font-size:12px;line-height:16px;color:#e4e6ea;letter-spacing:-0.003px;">Polyline</span>
<span class="t" style="left:101.5px;top:94.86px;font-size:12px;line-height:16px;color:#e4e6ea;letter-spacing:-0.195px;">Circle</span>
<span class="t" style="left:153.0px;top:94.86px;font-size:12px;line-height:16px;color:#e4e6ea;letter-spacing:-0.000px;">Arc</span>
<span class="t" style="left:93.5px;top:132.86px;font-size:12px;line-height:16px;color:#e4e6ea;letter-spacing:-0.376px;">Draw</span>
<span class="t" style="left:254.5px;top:60.86px;font-size:12px;line-height:16px;color:#e4e6ea;letter-spacing:0.039px;">Move</span>
<span class="t" style="left:254.5px;top:84.86px;font-size:12px;line-height:16px;color:#e4e6ea;letter-spacing:-0.129px;">Copy</span>
<span class="t" style="left:254.5px;top:108.86px;font-size:12px;line-height:16px;color:#e4e6ea;letter-spacing:-0.288px;">Stretch</span>
<span class="t" style="left:326.6px;top:60.86px;font-size:12px;line-height:16px;color:#e4e6ea;letter-spacing:-0.293px;">Rotate</span>
<span class="t" style="left:326.6px;top:84.86px;font-size:12px;line-height:16px;color:#e4e6ea;letter-spacing:0.179px;">Mirror</span>
<span class="t" style="left:326.6px;top:108.86px;font-size:12px;line-height:16px;color:#e4e6ea;letter-spacing:-0.724px;">Scale</span>
<span class="t" style="left:395.6px;top:60.86px;font-size:12px;line-height:16px;color:#e4e6ea;letter-spacing:-0.461px;">Trim</span>
<span class="t" style="left:395.6px;top:84.86px;font-size:12px;line-height:16px;color:#e4e6ea;letter-spacing:-0.156px;">Fillet</span>
<span class="t" style="left:395.6px;top:108.86px;font-size:12px;line-height:16px;color:#e4e6ea;letter-spacing:-0.254px;">Array</span>
<span class="t" style="left:325.5px;top:132.86px;font-size:12px;line-height:16px;color:#e4e6ea;letter-spacing:0.276px;">Modify</span>
<span class="t" style="left:486.6px;top:50.83px;font-size:39.5px;line-height:51px;color:#dfe1e5;letter-spacing:0.652px;-webkit-text-stroke:1.1px #dfe1e5;">A</span>
<span class="t" style="left:490.3px;top:94.86px;font-size:12px;line-height:16px;color:#e4e6ea;letter-spacing:-0.627px;">Text</span>
<span class="t" style="left:524.4px;top:94.86px;font-size:12px;line-height:16px;color:#e4e6ea;letter-spacing:-0.055px;">Dimension</span>
<span class="t" style="left:610.5px;top:60.86px;font-size:12px;line-height:16px;color:#e4e6ea;letter-spacing:-0.360px;">Linear</span>
<span class="t" style="left:610.5px;top:84.86px;font-size:12px;line-height:16px;color:#e4e6ea;letter-spacing:-0.478px;">Leader</span>
<span class="t" style="left:610.5px;top:108.86px;font-size:12px;line-height:16px;color:#e4e6ea;letter-spacing:-0.438px;">Table</span>
<span class="t" style="left:533.4px;top:132.86px;font-size:12px;line-height:16px;color:#e4e6ea;letter-spacing:0.172px;">Annotation</span>
<span class="t" style="left:683.5px;top:94.86px;font-size:12px;line-height:16px;color:#e4e6ea;letter-spacing:-0.564px;">Layer</span>
<span class="t" style="left:670.5px;top:109.86px;font-size:12px;line-height:16px;color:#e4e6ea;letter-spacing:-0.249px;">Properties</span>
<span class="t" style="left:828.2px;top:61.86px;font-size:12px;line-height:16px;color:#e4e6ea;letter-spacing:-0.574px;">0</span>
<span class="t" style="left:848.5px;top:84.86px;font-size:12px;line-height:16px;color:#e4e6ea;letter-spacing:-0.108px;">Make Current</span>
<span class="t" style="left:848.5px;top:108.86px;font-size:12px;line-height:16px;color:#e4e6ea;letter-spacing:-0.139px;">Match Layer</span>
<span class="t" style="left:778.4px;top:132.86px;font-size:12px;line-height:16px;color:#e4e6ea;letter-spacing:-0.570px;">Layers</span>
<span class="t" style="left:945.6px;top:93.86px;font-size:12px;line-height:16px;color:#e4e6ea;letter-spacing:-0.285px;">Insert</span>
<span class="t" style="left:1004.7px;top:60.86px;font-size:12px;line-height:16px;color:#e4e6ea;letter-spacing:-0.470px;">Create</span>
<span class="t" style="left:1004.7px;top:84.86px;font-size:12px;line-height:16px;color:#e4e6ea;letter-spacing:-0.445px;">Edit</span>
<span class="t" style="left:1004.7px;top:108.86px;font-size:12px;line-height:16px;color:#e4e6ea;letter-spacing:0.017px;">Edit Attributes</span>
<span class="t" style="left:997.4px;top:132.86px;font-size:12px;line-height:16px;color:#e4e6ea;letter-spacing:-0.149px;">Block</span>
<span class="t" style="left:1114.5px;top:94.86px;font-size:12px;line-height:16px;color:#e4e6ea;letter-spacing:0.064px;">Match</span>
<span class="t" style="left:1104.3px;top:109.86px;font-size:12px;line-height:16px;color:#e4e6ea;letter-spacing:-0.219px;">Properties</span>
<span class="t" style="left:1208.0px;top:60.86px;font-size:12px;line-height:16px;color:#e4e6ea;letter-spacing:-0.389px;">ByLayer</span>
<span class="t" style="left:1254.3px;top:84.86px;font-size:12px;line-height:16px;color:#e4e6ea;letter-spacing:-0.475px;">ByLayer</span>
<span class="t" style="left:1254.3px;top:108.86px;font-size:12px;line-height:16px;color:#e4e6ea;letter-spacing:-0.475px;">ByLayer</span>
<span class="t" style="left:1192.6px;top:132.86px;font-size:12px;line-height:16px;color:#e4e6ea;letter-spacing:-0.229px;">Properties</span>
<span class="t" style="left:1369.4px;top:94.86px;font-size:12px;line-height:16px;color:#e4e6ea;letter-spacing:-0.151px;">Group</span>
<span class="t" style="left:1372.4px;top:132.86px;font-size:12px;line-height:16px;color:#e4e6ea;letter-spacing:-0.292px;">Groups</span>
<span class="t" style="left:1446.4px;top:94.86px;font-size:12px;line-height:16px;color:#e4e6ea;letter-spacing:-0.298px;">Measure</span>
<span class="t" style="left:1454.4px;top:132.86px;font-size:12px;line-height:16px;color:#e4e6ea;letter-spacing:-0.064px;">Utilities</span>
<span class="t" style="left:1543.5px;top:94.86px;font-size:12px;line-height:16px;color:#e4e6ea;letter-spacing:-0.637px;">Paste</span>
<span class="t" style="left:1549.5px;top:132.86px;font-size:12px;line-height:16px;color:#e4e6ea;letter-spacing:-0.007px;">Clipboard</span>
<span class="t" style="left:1640.3px;top:94.86px;font-size:12px;line-height:16px;color:#e4e6ea;letter-spacing:-0.863px;">Base</span>
<span class="t" style="left:1626.2px;top:132.86px;font-size:12px;line-height:16px;color:#e4e6ea;letter-spacing:-0.249px;">View</span>
<span class="t" style="left:58.3px;top:157.86px;font-size:12px;line-height:16px;color:#e2e4e8;letter-spacing:-0.348px;">Start</span>
<span class="t" style="left:106.3px;top:157.86px;font-size:12px;line-height:16px;color:#e2e4e8;letter-spacing:0.027px;">Stor-Perde-PislikMimar.com*</span>
<span class="t" style="left:297.5px;top:157.86px;font-size:12px;line-height:16px;color:#e2e4e8;letter-spacing:0.117px;">Aplik (PislikMimar.com)*</span>
<span class="t" style="left:465.2px;top:157.86px;font-size:12px;line-height:16px;color:#e2e4e8;letter-spacing:0.031px;">Bateri (PislikMimar.com)*</span>
<span class="t" style="left:636.5px;top:157.86px;font-size:12px;line-height:16px;color:#ffffff;letter-spacing:0.104px;font-weight:bold;">Helikopter*</span>
<span class="t" style="left:1669.4px;top:6.02px;font-size:13px;line-height:17px;color:#474e59;letter-spacing:-0.430px;">?</span>
<svg width="1920" height="1080" viewBox="0 0 1920 1080">
<defs>
<linearGradient id="gblue" x1="0" y1="0" x2="0.3" y2="1"><stop offset="0" stop-color="#17437a"/><stop offset="0.55" stop-color="#1f528c"/><stop offset="1" stop-color="#3a6ba3"/></linearGradient>
<linearGradient id="gyel" x1="0" y1="0" x2="1" y2="0.6"><stop offset="0" stop-color="#f3e27a"/><stop offset="0.25" stop-color="#f0d648"/><stop offset="0.6" stop-color="#efc92a"/><stop offset="1" stop-color="#f2d750"/></linearGradient>
<linearGradient id="gfold" x1="0" y1="1" x2="1" y2="0"><stop offset="0" stop-color="#173a6a"/><stop offset="0.5" stop-color="#2c5b93"/><stop offset="1" stop-color="#5b86b8"/></linearGradient>
<linearGradient id="gred" x1="0" y1="0" x2="0" y2="1"><stop offset="0" stop-color="#f01a26"/><stop offset="0.45" stop-color="#de1f2a"/><stop offset="1" stop-color="#bf272e"/></linearGradient>
<radialGradient id="gcirc" cx="0.55" cy="0.3" r="0.75"><stop offset="0" stop-color="#d0181f"/><stop offset="0.55" stop-color="#a91118"/><stop offset="1" stop-color="#6e080d"/></radialGradient>
<radialGradient id="ghair" cx="0.5" cy="0.75" r="0.6"><stop offset="0" stop-color="#fde04a"/><stop offset="0.45" stop-color="#fbc21f"/><stop offset="1" stop-color="#f08c0e"/></radialGradient>
<linearGradient id="gtxt" x1="0" y1="0" x2="0" y2="1"><stop offset="0" stop-color="#2fb3ea"/><stop offset="0.5" stop-color="#1c8fdc"/><stop offset="1" stop-color="#1560bd"/></linearGradient>
</defs>
<path d="M88.3 775H143.6C152 781 164 794 177.9 810.8V892.2H88.3Z" fill="url(#gblue)"/>
<path d="M88.3 837.6L115.5 838.3L177.9 856V892.2H88.3Z" fill="url(#gyel)"/>
<path d="M88.3 891.4000000000001H177.9" stroke="#d9c04e" stroke-width="1.6" opacity="0.55"/>
<path d="M143.6 775C152 781 164 794 177.9 810.8C170 804 160 801 152.5 801.5C154 793 150 783 143.6 775Z" fill="url(#gfold)"/>
<path d="M88.3 813.2H177.9M114.6 775V838.4" stroke="#fff" stroke-width="3.3" fill="none"/>
<rect x="104.9" y="803.4" width="19.9" height="19.8" fill="#1f518c" stroke="#fff" stroke-width="2.7"/>
<rect x="113" y="811.5" width="3.3" height="3.3" fill="#fff"/>
<text x="110.6" y="883.6" font-family="Liberation Sans, sans-serif" font-weight="bold" font-size="26.6" fill="#0a0a0a" stroke="#0a0a0a" stroke-width="1" stroke-linejoin="round" textLength="64.6" lengthAdjust="spacingAndGlyphs">.dwg</text>
<rect x="13.6" y="910.6" width="233" height="84.4" rx="42.2" fill="#7d0d12"/>
<rect x="12.7" y="912.2" width="232.6" height="82.8" rx="41.4" fill="url(#gred)"/>
<circle cx="204.4" cy="954.4" r="25.3" fill="#c2242b"/>
<circle cx="204.4" cy="954.4" r="24.6" fill="url(#gcirc)"/>
<path d="M197.8 936.2H209.4V953.2H217.8L203.5 972L188.6 953.2H197.8Z" fill="#fff"/>
<text x="32.2" y="965.9" font-family="Liberation Sans, sans-serif" font-weight="bold" font-size="32.6" fill="#fff" stroke="#fff" stroke-width="0.7" textLength="137.6" lengthAdjust="spacingAndGlyphs">DOWNLOAD</text>
<g transform="translate(1680 180) scale(0.19452)" stroke-linejoin="round" stroke-linecap="round">
<path d="M725 250C770 215 830 225 872 278C830 250 790 248 740 280Z" fill="#333335"/>
<path d="M740 270C790 265 830 300 806 366C800 320 780 300 735 300Z" fill="#333335"/>
<path d="M875 272C890 300 915 318 945 320C985 308 1030 326 1042 372C1050 412 1024 442 1020 482C1018 522 1012 550 997 558C982 547 982 515 977 486C968 504 954 502 946 478C932 452 912 424 903 382C895 340 880 310 875 272Z" fill="#f6b417" stroke="#d98c0a" stroke-width="5"/>
<path d="M925 338C960 326 1005 338 1020 375C1026 412 1004 432 998 476C986 442 958 422 946 382Z" fill="#fcd84a"/>
<path d="M102 733L922 420" stroke="#4a2a12" stroke-width="34"/><path d="M102 733L922 420" stroke="#a9652c" stroke-width="24"/><path d="M104 728L920 416" stroke="#c4803c" stroke-width="7"/>
<path d="M415 770C370 790 335 820 322 872L392 900C405 870 430 850 520 815L560 850C580 880 600 905 618 930L682 900C665 870 645 830 622 805Z" fill="#1c7fd8" stroke="#0e4f9a" stroke-width="5"/>
<path d="M320 870L392 897L380 932L312 905Z" fill="#38383a"/><path d="M614 926L678 898L692 936L630 962Z" fill="#38383a"/>
<path d="M313 905L380 931C372 955 330 978 272 992C255 985 258 968 275 955Z" fill="#1c7fd8" stroke="#0e4f9a" stroke-width="5"/>
<path d="M630 961L691 936C705 955 722 990 712 1020C690 1015 660 995 630 961Z" fill="#1c7fd8" stroke="#0e4f9a" stroke-width="5"/>
<path d="M415 545C450 535 480 535 505 542L560 592L690 532C720 528 750 532 772 542C770 570 760 610 740 640C710 650 670 648 650 640L612 612C600 660 600 740 612 802C590 815 560 818 540 816C510 812 440 795 408 770C415 730 425 690 430 650L402 612L335 652L300 625C310 600 380 555 415 545Z" fill="#1f86de" stroke="#0e4f9a" stroke-width="5"/>
<path d="M560 592C545 650 530 720 520 790L545 800C555 720 570 650 585 600Z" fill="#6d737b"/>
<path d="M410 752C450 775 500 790 540 795C570 795 595 790 608 782L611 802C590 815 560 818 540 816C500 812 440 795 408 770Z" fill="#6d737b"/>
<path d="M680 545C690 560 700 575 700 580C720 575 735 560 740 545Z" fill="#fff"/>
<path d="M240 680L760 482" stroke="#4a2a12" stroke-width="34"/><path d="M240 680L760 482" stroke="#a9652c" stroke-width="24"/><path d="M242 675L758 478" stroke="#c4803c" stroke-width="7"/>
<ellipse cx="290" cy="668" rx="42" ry="36" fill="#f7c08e" stroke="#4a2a12" stroke-width="5"/>
<ellipse cx="745" cy="495" rx="38" ry="32" fill="#f7c08e" stroke="#4a2a12" stroke-width="5"/>
<ellipse cx="735" cy="375" rx="22" ry="36" fill="#f2b07c" stroke="#4a2a12" stroke-width="5"/>
<path d="M338 290C325 360 345 440 400 490C450 525 520 545 590 525C660 500 715 440 728 370L730 290Z" fill="#f7bd8c" stroke="#4a2a12" stroke-width="5"/>
<path d="M690 305L724 300V372L692 395Z" fill="#f29a1a"/>
<ellipse cx="436" cy="332" rx="55" ry="42" fill="#fff" stroke="#4a2a12" stroke-width="4"/><ellipse cx="594" cy="338" rx="55" ry="40" fill="#fff" stroke="#4a2a12" stroke-width="4"/>
<circle cx="447" cy="336" r="25" fill="#4ba3d3"/><circle cx="583" cy="341" r="24" fill="#4ba3d3"/><circle cx="447" cy="336" r="11" fill="#222"/><circle cx="583" cy="341" r="11" fill="#222"/>
<path d="M480 395C470 415 480 425 505 418M442 440C480 470 540 470 586 434M500 488C505 495 515 495 520 488" fill="none" stroke="#4a2a12" stroke-width="5"/>
<path d="M362 228L355 135L382 165L395 103L428 122L456 65L472 95L582 38L576 76L640 55L636 100L700 110L686 146L730 186L722 245L540 255Z" fill="url(#ghair)" stroke="#c9730a" stroke-width="5"/>
<path d="M430 225L445 140L472 190L522 95L545 170L592 100L602 185L655 135L668 225Z" fill="#fde262" opacity="0.75"/>
<path d="M345 220C420 245 620 250 726 232C740 255 740 280 734 296C640 325 430 320 338 300C328 275 332 245 345 220Z" fill="#3b3b3e"/>
<path d="M345 262C430 285 620 290 732 268" stroke="#2a2a2c" stroke-width="5" fill="none"/>
</g>
<text font-family="Liberation Sans, sans-serif" font-weight="bold" fill="url(#gtxt)" xml:space="preserve"><tspan x="1652" y="405" font-size="52" rotate="-3">P</tspan><tspan x="1682.5" y="415" font-size="25" rotate="5">i</tspan><tspan x="1695" y="419.5" font-size="40" rotate="8" textLength="18.5" lengthAdjust="spacingAndGlyphs">s</tspan><tspan x="1717" y="423.5" font-size="47" rotate="-6">l</tspan><tspan x="1734.5" y="428" font-size="25" rotate="-3">i</tspan><tspan x="1744" y="428.5" font-size="43" rotate="0">k</tspan><tspan x="1768" y="427" font-size="12" rotate="0"> </tspan><tspan x="1772" y="426.8" font-size="48" rotate="-4">M</tspan><tspan x="1818" y="425" font-size="23" rotate="-6">i</tspan><tspan x="1827.5" y="424" font-size="29" rotate="-8" textLength="36" lengthAdjust="spacingAndGlyphs">m</tspan><tspan x="1865" y="416" font-size="36" rotate="-14" textLength="23" lengthAdjust="spacingAndGlyphs">a</tspan><tspan x="1896.5" y="408.5" font-size="48" rotate="-22" textLength="27" lengthAdjust="spacingAndGlyphs">r</tspan></text>
<circle cx="1893" cy="435" r="0.8" fill="#444"/>
</svg>
</body></html>
